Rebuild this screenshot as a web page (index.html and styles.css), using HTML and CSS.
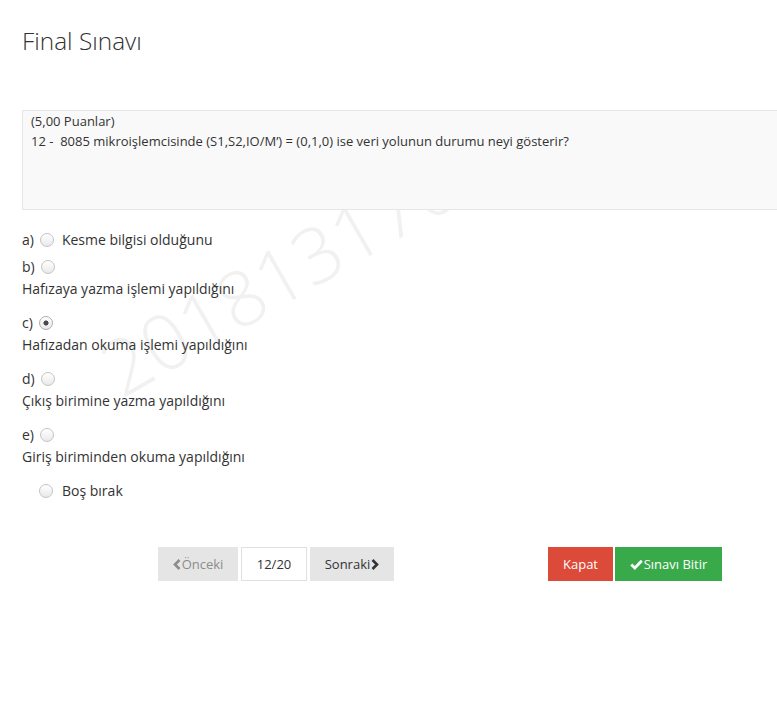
FILE: index.html
```html
<!DOCTYPE html>
<html lang="tr">
<head>
<meta charset="utf-8">
<title>Final Sınavı</title>
<link rel="stylesheet" href="styles.css">
</head>
<body>
<div class="page">
  <div class="watermark">2018131701</div>
  <h1 class="title">Final Sınavı</h1>
  <div class="question">
    <div>(5,00 Puanlar)</div>
    <div>12 -&nbsp; 8085 mikroişlemcisinde (S1,S2,IO/M’) = (0,1,0) ise veri yolunun durumu neyi gösterir?</div>
  </div>
  <div class="options">
    <div class="opt opt-first">
      <div class="opt-head"><span>a)</span><input type="radio" name="c" class="radio"><span>Kesme bilgisi olduğunu</span></div>
    </div>
    <div class="opt">
      <div class="opt-head"><span>b)</span><input type="radio" name="c" class="radio"></div>
      <p class="opt-text">Hafızaya yazma işlemi yapıldığını</p>
    </div>
    <div class="opt">
      <div class="opt-head"><span>c)</span><input type="radio" name="c" class="radio" checked></div>
      <p class="opt-text">Hafızadan okuma işlemi yapıldığını</p>
    </div>
    <div class="opt">
      <div class="opt-head"><span>d)</span><input type="radio" name="c" class="radio"></div>
      <p class="opt-text">Çıkış birimine yazma yapıldığını</p>
    </div>
    <div class="opt">
      <div class="opt-head"><span>e)</span><input type="radio" name="c" class="radio"></div>
      <p class="opt-text">Giriş biriminden okuma yapıldığını</p>
    </div>
    <div class="opt">
      <div class="opt-head blank"><input type="radio" name="c" class="radio"><span>Boş bırak</span></div>
    </div>
  </div>
  <div class="controls">
    <div class="pager">
      <button class="btn btn-gray btn-disabled btn-prev"><svg class="chev" width="8" height="11" viewBox="0 0 8 11"><path d="M6.5 1 L2 5.5 L6.5 10" fill="none" stroke="currentColor" stroke-width="2.6"/></svg>Önceki</button>
      <span class="counter">12/20</span>
      <button class="btn btn-gray btn-next">Sonraki<svg class="chev" width="8" height="11" viewBox="0 0 8 11"><path d="M1.5 1 L6 5.5 L1.5 10" fill="none" stroke="currentColor" stroke-width="2.6"/></svg></button>
    </div>
    <div class="actions">
      <button class="btn btn-red btn-close">Kapat</button>
      <button class="btn btn-green btn-finish"><svg class="check" width="13" height="11" viewBox="0 0 13 11"><path d="M1.3 5.6 L4.8 9 L11.8 1.8" fill="none" stroke="currentColor" stroke-width="2.8"/></svg>Sınavı Bitir</button>
    </div>
  </div>
</div>
</body>
</html>
```

FILE: styles.css
```css
html, body {
  margin: 0;
  padding: 0;
  background: #fff;
  overflow-x: hidden;
}
body {
  font-family: "Open Sans", "DejaVu Sans", sans-serif;
  font-size: 13px;
  line-height: 20px;
  color: #333;
}
.page {
  position: relative;
  padding: 0 0 0 22px;
  min-height: 704px;
  box-sizing: border-box;
}
.watermark {
  position: absolute;
  left: 88px;
  top: 340px;
  font-size: 77px;
  line-height: 1;
  font-weight: 300;
  color: #f1f1f1;
  transform-origin: 0 0;
  transform: rotate(-30deg);
  white-space: nowrap;
  pointer-events: none;
  z-index: 0;
}
.title {
  position: relative;
  margin: 0;
  padding-top: 26px;
  font-size: 24.4px;
  line-height: 30px;
  font-weight: 300;
  color: #333;
}
.question {
  position: relative;
  z-index: 1;
  margin-top: 54px;
  margin-right: -40px;
  height: 100px;
  box-sizing: border-box;
  padding: 0 8px;
  background: #f9f9f9;
  border: 1px solid #e6e6e6;
}
.options {
  position: relative;
  margin-top: 19px;
  font-size: 14px;
}
.opt {
  margin-bottom: 13px;
}
.opt-first {
  margin-bottom: 5px;
}
.opt-head {
  display: flex;
  align-items: center;
  height: 22px;
}
.opt-text {
  margin: 0;
  line-height: 21px;
}
.radio {
  appearance: none;
  -webkit-appearance: none;
  width: 14px;
  height: 14px;
  margin: 0 8px 0 6px;
  border-radius: 50%;
  border: 1px solid #c4c4c4;
  box-sizing: border-box;
  background: linear-gradient(#ffffff, #e9e9e9);
  flex: none;
}
.radio:checked {
  border-color: #adadad;
  background: radial-gradient(circle at center, #4a4a4a 0, #4a4a4a 2.2px, transparent 2.9px), linear-gradient(#ffffff, #e9e9e9);
}
.blank {
  padding-left: 11px;
}
.blank .radio {
  margin-right: 9px;
}
.controls {
  position: relative;
  display: flex;
  margin-top: 45px;
  padding-left: 136px;
}
.pager, .actions {
  display: flex;
  gap: 3px;
}
.actions {
  margin-left: 154px;
  gap: 2px;
}
.btn {
  display: inline-flex;
  align-items: center;
  justify-content: center;
  height: 34px;
  box-sizing: border-box;
  padding: 0;
  border: none;
  font-family: "Open Sans", "DejaVu Sans", sans-serif;
  font-size: 13px;
  line-height: 20px;
  cursor: pointer;
}
.btn-gray {
  background: #e5e5e5;
  color: #333;
}
.btn-disabled {
  color: #8c8c8c;
}
.btn-prev { width: 80px; }
.btn-next { width: 84px; }
.btn-prev .chev { margin-right: 1px; margin-top: 1px; }
.btn-next .chev { margin-left: 1px; margin-top: 1px; }
.counter {
  display: inline-flex;
  align-items: center;
  justify-content: center;
  width: 66px;
  height: 34px;
  box-sizing: border-box;
  border: 1px solid #e0e0e0;
  background: #fff;
  color: #333;
}
.btn-red {
  background: #dc4a3a;
  color: #fff;
  width: 65px;
}
.btn-green {
  background: #39aa49;
  color: #fff;
  width: 107px;
}
.check { margin-right: 1px; }
```
